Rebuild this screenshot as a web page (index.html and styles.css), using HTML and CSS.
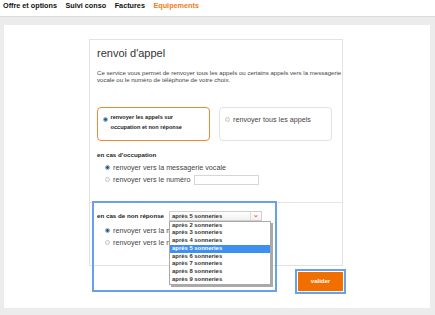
FILE: index.html
```html
<!DOCTYPE html>
<html>
<head lang="fr">
    <meta charset="UTF-8">
    <title>renvoi d'appel</title>
    <link rel="stylesheet" href="styles.css">
</head>
<body>
<div class="g-top-nav">
    <a href="#">Offre et options</a>
    <a href="#">Suivi conso</a>
    <a href="#">Factures</a>
    <a href="#" class="active">Equipements</a>
</div>
<div class="g-panel">
    <div class="m-card">
        <h1 class="card-title">renvoi d'appel</h1>
        <p class="card-desc">Ce service vous permet de renvoyer tous les appels ou certains appels vers la messagerie vocale ou le numéro de téléphone de votre choix.</p>
        <div class="choice-row">
            <div class="choice active">
                <span class="radio checked"></span>
                <span class="choice-small">renvoyer les appels sur<br>occupation et non réponse</span>
            </div>
            <div class="choice">
                <span class="radio"></span>
                <span class="choice-big">renvoyer tous les appels</span>
            </div>
        </div>
        <div class="section">
            <h2 class="section-title">en cas d'occupation</h2>
            <div class="opt"><span class="radio checked"></span>renvoyer vers la messagerie vocale</div>
            <div class="opt"><span class="radio"></span>renvoyer vers le numéro <span class="num-input"></span></div>
        </div>
        <div class="section split">
            <div class="noreply-hd">
                <h2 class="section-title">en cas de non réponse</h2>
                <div class="m-select">
                    <span class="select-val">après 5 sonneries</span>
                    <span class="select-btn">&#8964;</span>
                    <ul class="select-list">
                        <li>après 2 sonneries</li>
                        <li>après 3 sonneries</li>
                        <li>après 4 sonneries</li>
                        <li class="on">après 5 sonneries</li>
                        <li>après 6 sonneries</li>
                        <li>après 7 sonneries</li>
                        <li>après 8 sonneries</li>
                        <li>après 9 sonneries</li>
                    </ul>
                </div>
            </div>
            <div class="opt"><span class="radio checked"></span>renvoyer vers la messagerie vocale</div>
            <div class="opt"><span class="radio"></span>renvoyer vers le numéro</div>
        </div>
    </div>
    <div class="btn-row">
        <a href="#" class="btn-ok">valider</a>
    </div>
    <div class="hl-box"></div>
</div>
</body>
</html>
```

FILE: styles.css
```css
* {
    margin: 0;
    padding: 0;
    box-sizing: border-box;
}
ul {
    list-style: none;
}
a {
    text-decoration: none;
}
body {
    background-color: #ececec;
    font-family: "Liberation Sans", Arial, sans-serif;
    color: #333;
}
.g-top-nav {
    display: flex;
    height: 17px;
    padding: 1.5px 0 0 3px;
    border-bottom: 1px solid #dcdcdc;
    background-color: #fff;
    font-size: 7.25px;
    line-height: 7px;
    font-weight: bold;
}
.g-top-nav a {
    margin-right: 8.5px;
    color: #111;
}
.g-top-nav a.active {
    color: #f47a20;
}
.g-panel {
    position: relative;
    height: 283px;
    margin: 8px 5px 0 4px;
    padding: 14px 0 0 85px;
    background-color: #fff;
}
.m-card {
    width: 254px;
    height: 227px;
    padding-left: 7px;
    border: 1px solid #e3e3e3;
}
.card-title {
    margin-top: 6.5px;
    font-size: 11px;
    line-height: 13px;
    font-weight: normal;
    color: #333;
}
.card-desc {
    margin: 9px -4px 0 0;
    font-size: 6.1px;
    line-height: 7.5px;
    color: #444;
}
.choice-row {
    display: flex;
    margin-top: 23px;
}
.choice {
    display: flex;
    align-items: flex-start;
    width: 113px;
    height: 34px;
    margin-right: 9px;
    padding: 9px 0 0 5px;
    border: 1px solid #e2e2e2;
    border-radius: 4px;
}
.choice.active {
    padding: 4.5px 0 0 4.5px;
    border: 1.5px solid #ef8a3a;
}
.choice.active .radio {
    margin-top: 4.5px;
}
.choice-small {
    font-size: 5.6px;
    line-height: 10px;
    font-weight: bold;
    color: #222;
}
.choice-big {
    font-size: 7.2px;
    line-height: 8px;
    color: #444;
    margin-top: -1px;
}
.radio {
    display: inline-block;
    flex: none;
    width: 5px;
    height: 5px;
    margin-right: 3px;
    border: 1px solid #c9c9c9;
    border-radius: 50%;
    background-color: #f4f4f4;
}
.radio.checked {
    border-color: #8aa0b4;
    background: radial-gradient(circle, #1f5f93 0, #1f5f93 1.2px, #c8d6e2 1.6px);
}
.section {
    padding-top: 10px;
}
.section-title {
    font-size: 6.2px;
    line-height: 8px;
    font-weight: bold;
    color: #222;
}
.opt {
    display: flex;
    align-items: center;
    height: 12px;
    padding-left: 8px;
    font-size: 7.2px;
    color: #444;
}
.section .section-title {
    margin-bottom: 3px;
}
.num-input {
    display: inline-block;
    width: 65px;
    height: 10px;
    margin-left: 3px;
    border: 1px solid #d6d6d6;
    background-color: #fff;
}
.section.split {
    height: 66px;
    margin: 16px 0 0 -7px;
    padding: 8px 0 0 7px;
    border-top: 1px solid #e6e6e6;
}
.noreply-hd {
    display: flex;
    align-items: center;
    margin-bottom: 4px;
}
.noreply-hd .section-title {
    margin: 0 5px 0 0;
}
.m-select {
    position: relative;
    display: flex;
    width: 93px;
    height: 10px;
    border: 1px solid #cfcfcf;
    background: linear-gradient(#fff, #f1f1f1);
    font-size: 5.9px;
    line-height: 8px;
    font-weight: bold;
    color: #333;
}
.select-val {
    flex: 1;
    padding-left: 2px;
}
.select-btn {
    width: 11px;
    border-left: 1px solid #dcdcdc;
    color: #f47a20;
    font-size: 7px;
    line-height: 5px;
    text-align: center;
}
.select-list {
    position: absolute;
    top: 9px;
    left: -1px;
    width: 102px;
    border: 1px solid #a9a9a9;
    background-color: #fff;
    box-shadow: 2px 2px 0 #aaa;
    z-index: 10;
}
.select-list li {
    height: 7.75px;
    padding-left: 2px;
    line-height: 7.75px;
}
.select-list li.on {
    background-color: #3d8ff0;
    color: #fff;
}
.btn-row {
    display: flex;
    justify-content: flex-end;
    width: 254px;
    margin-top: 6px;
}
.btn-ok {
    width: 45px;
    height: 19px;
    background-color: #f16e00;
    color: #fff;
    font-size: 6px;
    line-height: 19px;
    font-weight: bold;
    text-align: center;
    outline: 2px solid #6aa0ea;
    outline-offset: 1px;
}
.hl-box {
    position: absolute;
    top: 176px;
    left: 88px;
    width: 185px;
    height: 91px;
    border: 2px solid #6aa0ea;
    pointer-events: none;
}
```
